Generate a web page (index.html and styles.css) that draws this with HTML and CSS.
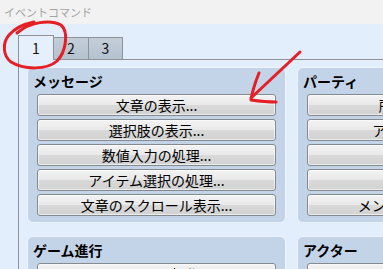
FILE: index.html
```html
<!DOCTYPE html>
<html lang="ja">
<head>
<meta charset="utf-8">
<title>イベントコマンド</title>
<link rel="stylesheet" href="styles.css">
</head>
<body>
<div class="titlebar">イベントコマンド</div>
<div class="main">
  <div class="tabs">
    <div class="tab active">1</div>
    <div class="tab t2">2</div>
    <div class="tab t3">3</div>
  </div>
  <div class="panel">
    <div class="grid">
      <section class="group">
        <h2 class="gtitle">メッセージ</h2>
        <div class="btns">
          <div class="btn">文章の表示...</div>
          <div class="btn">選択肢の表示...</div>
          <div class="btn">数値入力の処理...</div>
          <div class="btn">アイテム選択の処理...</div>
          <div class="btn">文章のスクロール表示...</div>
        </div>
      </section>
      <section class="group">
        <h2 class="gtitle">パーティ</h2>
        <div class="btns">
          <div class="btn">所持金の増減...</div>
          <div class="btn">アイテムの増減...</div>
          <div class="btn">武器の増減...</div>
          <div class="btn">防具の増減...</div>
          <div class="btn">メンバーの入れ替え...</div>
        </div>
      </section>
      <section class="group">
        <h2 class="gtitle">ゲーム進行</h2>
        <div class="btns">
          <div class="btn">スイッチの操作...</div>
          <div class="btn">変数の操作...</div>
        </div>
      </section>
      <section class="group">
        <h2 class="gtitle">アクター</h2>
        <div class="btns">
          <div class="btn">HPの増減...</div>
          <div class="btn">MPの増減...</div>
        </div>
      </section>
    </div>
  </div>
</div>
<svg class="annot" width="383" height="269" viewBox="0 0 383 269" xmlns="http://www.w3.org/2000/svg">
  <g fill="none" stroke="#e61e25" stroke-width="3" stroke-linecap="round" stroke-linejoin="round">
    <path d="M 17 33 C 30 22, 50 19, 61 25 C 69 32, 66 52, 57 61 C 47 70, 24 70, 11 62 C 3 56, 2 43, 9 35 C 15 28, 24 24, 34 22"/>
    <path d="M 300 52 L 251 98"/>
    <path d="M 259 73 C 255 83, 252 92, 251 100 C 258 101, 268 102, 276 102"/>
  </g>
</svg>
</body>
</html>
```

FILE: styles.css
```css
html, body {
  margin: 0;
  padding: 0;
}
body {
  width: 383px;
  height: 269px;
  overflow: hidden;
  position: relative;
  font-family: "Noto Sans CJK JP", "Noto Sans", sans-serif;
  background: #e2eefb;
}
.titlebar {
  height: 24px;
  background: #f2f2f2;
  color: #a3a3a3;
  font-size: 11px;
  line-height: 24px;
  padding-left: 4px;
  box-sizing: border-box;
}
.main {
  background: #e2eefb;
  height: 245px;
  overflow: hidden;
}
.tabs {
  display: flex;
  align-items: flex-end;
  padding: 11px 0 0 18px;
  height: 24px;
  box-sizing: content-box;
}
.tab {
  box-sizing: border-box;
  height: 22px;
  border: 1px solid #8e9399;
  border-bottom: none;
  background: linear-gradient(#c3ced9, #b5c2cf);
  font-size: 14px;
  line-height: 21px;
  text-align: center;
  color: #111;
}
.tab.active {
  width: 36px;
  height: 25px;
  margin-bottom: -1px;
  background: #e6f0fc;
  position: relative;
  z-index: 1;
  line-height: 24px;
}
.tab.t2 {
  width: 35px;
  border-left: none;
}
.tab.t3 {
  width: 35px;
  border-left: 1px solid #8e9399;
  margin-left: -1px;
}
.panel {
  margin-left: 18px;
  border-top: 1px solid #8e9399;
  border-left: 1px solid #8e9399;
  padding: 7px 0 0 8px;
}
.grid {
  display: grid;
  grid-template-columns: 259px 259px;
  column-gap: 11px;
  row-gap: 13px;
}
.group {
  box-sizing: border-box;
  border: 1px solid #eef4fb;
  border-radius: 6px;
  background: #c4d4e8;
  padding: 0 9px 6px 9px;
}
.gtitle {
  margin: 0 0 0 -4px;
  height: 26px;
  font-size: 14px;
  line-height: 26px;
  font-weight: bold;
  color: #000;
}
.btns {
  display: flex;
  flex-direction: column;
  gap: 3px;
}
.btn {
  box-sizing: border-box;
  height: 22px;
  border: 1px solid #858a8f;
  border-radius: 3px;
  background: linear-gradient(#f3f3f3 0%, #e9e9e9 48%, #d9d9d9 52%, #d2d2d2 100%);
  box-shadow: inset 0 0 0 1px rgba(255,255,255,0.6);
  font-size: 14px;
  line-height: 20px;
  text-align: center;
  color: #000;
  white-space: nowrap;
}
.annot {
  position: absolute;
  left: 0;
  top: 0;
  pointer-events: none;
}
```
